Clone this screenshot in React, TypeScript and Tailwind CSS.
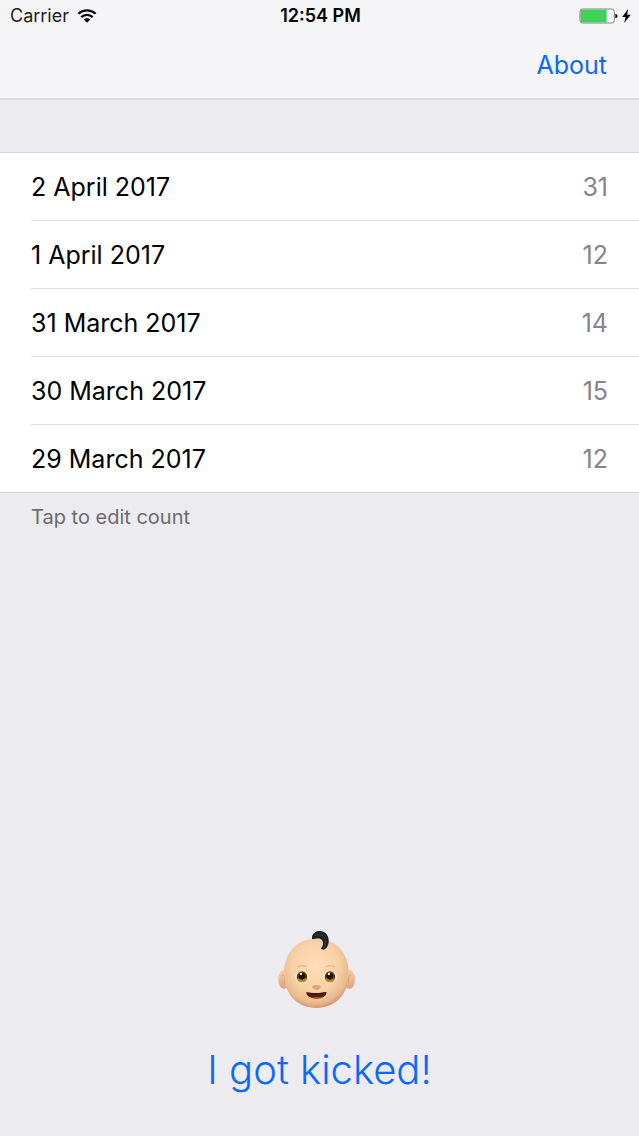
const days = [
  { date: "2 April 2017", count: 31 },
  { date: "1 April 2017", count: 12 },
  { date: "31 March 2017", count: 14 },
  { date: "30 March 2017", count: 15 },
  { date: "29 March 2017", count: 12 },
];

function WifiIcon() {
  return (
    <svg viewBox="0 0 57 43" className="h-3.5 w-5" aria-hidden="true">
      <g fill="none" stroke="#0b0b0d" strokeWidth="7">
        <path d="M2 14.5C17 .5 40 .5 55 14.5" />
        <path d="M11 25C21 15.500 36 15.500 46 25" />
      </g>
      <path d="M28.500 42L18.500 32.500C24 27 33 27 38.500 32.500Z" fill="#0b0b0d" />
    </svg>
  );
}

function BatteryIcon() {
  return (
    <svg viewBox="0 0 117 48" className="h-4 w-[39px]" aria-hidden="true">
      <rect x="3" y="3" width="103" height="42" rx="8" fill="#fbfbfc" stroke="#7d7b80" strokeWidth="3" />
      <path d="M10 5H83V43H10Q5 43 5 38V10Q5 5 10 5Z" fill="#3fd158" />
      <path d="M109 17Q116 19 116 24Q116 29 109 31Z" fill="#0b0b0d" />
    </svg>
  );
}

function BoltIcon() {
  return (
    <svg viewBox="0 0 26 42" className="h-3.5 w-[9px]" aria-hidden="true">
      <path d="M18 0L0 24H10L6 42L26 17H15Z" fill="#0b0b0d" />
    </svg>
  );
}

function Eye({ x }: { x: number }) {
  return (
    <g transform={`translate(${x} 170)`}>
      <ellipse rx="20" ry="15" fill="#fff8ef" />
      <circle r="16" fill="#6d3f08" />
      <path d="M-14 6Q0 0 14 6Q9 16 0 16Q-9 16-14 6Z" fill="#bd8617" />
      <circle r="10" cy="-1" fill="#1c0d08" />
      <circle r="3.500" cx="-3" cy="-8" fill="#fff" />
    </g>
  );
}

function BabyIcon() {
  return (
    <svg viewBox="36 30 234 240" className="h-20 w-[78px]" aria-hidden="true">
      <defs>
        <radialGradient id="skin" cx="48%" cy="40%" r="60%">
          <stop offset="0" stopColor="#ffdfb8" />
          <stop offset="0.6" stopColor="#f8d0a5" />
          <stop offset="0.88" stopColor="#eab98e" />
          <stop offset="1" stopColor="#d7976f" />
        </radialGradient>
        <linearGradient id="ear" x1="0" y1="0" x2="0" y2="1">
          <stop offset="0" stopColor="#f7cfa8" />
          <stop offset="1" stopColor="#dda27b" />
        </linearGradient>
      </defs>
      <ellipse cx="54" cy="178" rx="17" ry="29" fill="url(#ear)" />
      <ellipse cx="250" cy="178" rx="17" ry="29" fill="url(#ear)" />
      <path d="M48 165Q60 165 56 190" fill="none" stroke="#d8996f" strokeWidth="3" />
      <path d="M256 165Q244 165 248 190" fill="none" stroke="#d8996f" strokeWidth="3" />
      <path d="M151 56C207 56 248 96 248 160C248 224 207 264 151 264C95 264 54 224 54 160C54 96 95 56 151 56Z" fill="url(#skin)" />
      <path d="M138 50C142 34 160 29 174 36C193 46 192 76 177 88C173 91 167 89 165 85C172 77 174 66 167 59C160 52 149 57 138 57Z" fill="#1c2024" />
      <path d="M145 46Q174 38 179 61Q181 72 174 83" fill="none" stroke="#454b50" strokeWidth="2" />
      <path d="M94 141Q106 133 121 140M180 140Q195 133 207 141" fill="none" stroke="#e2b78d" strokeWidth="4" />
      <Eye x={108} />
      <Eye x={192} />
      <path d="M138 198Q151 192 165 198Q164 207 152 210Q140 207 138 198Z" fill="#dfa079" />
      <path d="M120 217Q151 223 182 216Q181 235 151 236Q123 235 120 217Z" fill="#571b16" />
      <path d="M123 219Q151 224 179 218" fill="none" stroke="#371010" strokeWidth="3" />
      <path d="M135 233Q151 229 168 233Q151 239 135 233Z" fill="#b7564b" />
    </svg>
  );
}

export default function App() {
  return (
    <div className="flex min-h-screen flex-col bg-[#ecebef] font-['Inter','Liberation_Sans',sans-serif] text-black">
      <header className="border-b-2 border-[#d9d8db] bg-[#f5f4f7]">
        <div className="grid h-8 grid-cols-3 items-center pr-2 pl-2.5">
          <div className="flex items-center gap-2 text-lg text-[#1d1d20]">
            Carrier
            <WifiIcon />
          </div>
          <time className="text-center text-lg font-semibold">12:54 PM</time>
          <div className="flex items-center justify-end gap-1">
            <BatteryIcon />
            <BoltIcon />
          </div>
        </div>
        <nav className="flex h-[66px] items-center justify-end px-8 pt-0.5">
          <button type="button" className="text-[25px] text-[#0b68f8]">
            About
          </button>
        </nav>
      </header>

      <main className="flex grow flex-col">
        <ul className="mt-[52px] border-y border-[#d6d5d9] bg-white pl-[31px]">
          {days.map((day) => (
            <li key={day.date} className="border-b border-[#dddce0] last:border-b-0">
              <button type="button" className="flex h-[67px] w-full items-center justify-between pt-0.5 pr-[31px] text-[25px]">
                <span>{day.date}</span>
                <span className="text-[#85848a]">{day.count}</span>
              </button>
            </li>
          ))}
        </ul>
        <p className="px-[31px] pt-2.5 text-xl leading-7 text-[#6b6a70]">Tap to edit count</p>

        <div className="mt-auto flex flex-col items-center pb-9">
          <div className="pr-1.5">
            <BabyIcon />
          </div>
          <button type="button" className="mt-[30px] text-[40px] leading-[60px] font-light text-[#0b68f8]">
            I got kicked!
          </button>
        </div>
      </main>
    </div>
  );
}
